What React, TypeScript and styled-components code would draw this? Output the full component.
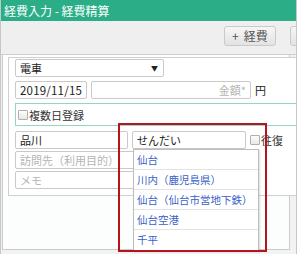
import React from "react";
import styled, { createGlobalStyle } from "styled-components";

const Global = createGlobalStyle`
	html, body {
		margin: 0;
		padding: 0;
		background: #ffffff;
		overflow: hidden;
	}
	body {
		font-family: "Noto Sans CJK JP", "Noto Sans", sans-serif;
		font-size: 11px;
		color: #333;
	}
`;

const Frame = styled.div`
	position: relative;
	width: 297px;
	height: 254px;
	box-sizing: border-box;
	border-left: 1px solid #c6c6c6;
	border-right: 1px solid #c6c6c6;
	background: #f2f2f2;
	overflow: hidden;
`;

const TitleBar = styled.div`
	height: 21px;
	background: #2bae88;
	color: #fff;
	font-size: 12px;
	line-height: 21px;
	padding-left: 3px;
`;

const Toolbar = styled.div`
	height: 34px;
	box-sizing: border-box;
	background: #efefef;
	border-bottom: 1px solid #cfcfcf;
	display: flex;
	gap: 14px;
	padding: 5px 0 0 223px;
	white-space: nowrap;
`;

const ToolButton = styled.div`
	flex: none;
	height: 20px;
	box-sizing: border-box;
	padding: 0 7px;
	border: 1px solid #cacaca;
	border-radius: 3px;
	background: linear-gradient(#f6f6f6, #e3e3e3);
	color: #555;
	font-size: 12px;
	line-height: 18px;
	display: flex;
	align-items: center;
	gap: 5px;
`;

const Body = styled.div`
	padding: 0 6px 0 1px;
`;

const OuterPanel = styled.div`
	height: 195px;
	box-sizing: border-box;
	border: 1px solid #cbcbcb;
	border-top: none;
	background: #fcfdfd;
	padding: 2px 0 0 5px;
`;

const FormPanel = styled.div`
	width: 292px;
	height: 139px;
	box-sizing: border-box;
	border: 1px solid #d0d0d0;
	background: #fff;
	padding: 1px 0 0 6px;
	display: flex;
	flex-direction: column;
	gap: 4px;
`;

const Row = styled.div<{ $gap?: number }>`
	display: flex;
	align-items: center;
	gap: ${(p) => p.$gap ?? 4}px;
	white-space: nowrap;
`;

const Field = styled.div<{ $w: number; $placeholder?: boolean; $right?: boolean }>`
	width: ${(p) => p.$w}px;
	height: 18px;
	box-sizing: border-box;
	border: 1px solid #c9c9c9;
	border-radius: 2px;
	background: #fff;
	padding: 0 4px;
	line-height: 16px;
	font-size: 11px;
	color: ${(p) => (p.$placeholder ? "#b4b4b4" : "#222")};
	text-align: ${(p) => (p.$right ? "right" : "left")};
	overflow: hidden;
	position: relative;
`;

const DateText = styled.span`
	font-size: 11.5px;
	letter-spacing: 0.2px;
`;

const Arrow = styled.span`
	position: absolute;
	right: 5px;
	top: 0;
	font-size: 7px;
	color: #222;
`;

const Unit = styled.span`
	font-size: 11px;
	color: #222;
`;

const MultiDayBox = styled.div`
	height: 23px;
	box-sizing: border-box;
	border: 1px solid #93d6c2;
	border-right: none;
	display: flex;
	align-items: center;
	padding-left: 2px;
	gap: 1px;
`;

const Check = styled.span`
	width: 8px;
	height: 8px;
	border: 1px solid #b0b0b0;
	border-radius: 1px;
	background: linear-gradient(#fdfdfd, #e8e8e8);
	flex: none;
`;

const CheckLabel = styled.label`
	display: flex;
	align-items: center;
	gap: 1px;
	color: #333;
	font-size: 11px;
`;

const RouteRows = styled.div`
	display: flex;
	flex-direction: column;
	gap: 2px;
	margin-top: 1px;
`;

const Suggest = styled.div`
	position: absolute;
	left: 132px;
	top: 149px;
	width: 124px;
	background: #fff;
	border: 1px solid #bdbdbd;
	box-shadow: 1px 1px 2px rgba(0, 0, 0, 0.15);
`;

const SuggestItem = styled.div`
	height: 20px;
	box-sizing: border-box;
	border-bottom: 1px solid #e2e2e2;
	padding-left: 3px;
	line-height: 19px;
	font-size: 10.5px;
	color: #3b5fc8;
	white-space: nowrap;
	&:last-child {
		border-bottom: none;
	}
`;

const Highlight = styled.div`
	position: absolute;
	left: 117px;
	top: 123px;
	width: 149px;
	height: 129px;
	box-sizing: border-box;
	border: 2px solid #b5141c;
	pointer-events: none;
`;

const stations = ["仙台", "川内（鹿児島県）", "仙台（仙台市営地下鉄）", "仙台空港", "千平"];

export default function App() {
	return <>
		<Global/>
		<Frame>
			<TitleBar>経費入力 - 経費精算</TitleBar>
			<Toolbar>
				<ToolButton><span>+</span>経費</ToolButton>
				<ToolButton><span>+</span>交通費</ToolButton>
			</Toolbar>
			<Body>
				<OuterPanel>
					<FormPanel>
						<Row>
							<Field $w={149}>電車<Arrow>▼</Arrow></Field>
						</Row>
						<Row>
							<Field $w={72}><DateText>2019/11/15</DateText></Field>
							<Field $w={160} $placeholder $right>金額*</Field>
							<Unit>円</Unit>
						</Row>
						<MultiDayBox>
							<CheckLabel><Check/>複数日登録</CheckLabel>
						</MultiDayBox>
						<RouteRows>
							<Row>
								<Field $w={113}>品川</Field>
								<Field $w={114}>せんだい</Field>
								<CheckLabel><Check/>往復</CheckLabel>
							</Row>
							<Row><Field $w={230} $placeholder>訪問先（利用目的）</Field></Row>
							<Row><Field $w={230} $placeholder>メモ</Field></Row>
						</RouteRows>
					</FormPanel>
				</OuterPanel>
			</Body>
			<Suggest>
				{stations.map((s) => <SuggestItem key={s}>{s}</SuggestItem>)}
			</Suggest>
			<Highlight/>
		</Frame>
	</>;
}
